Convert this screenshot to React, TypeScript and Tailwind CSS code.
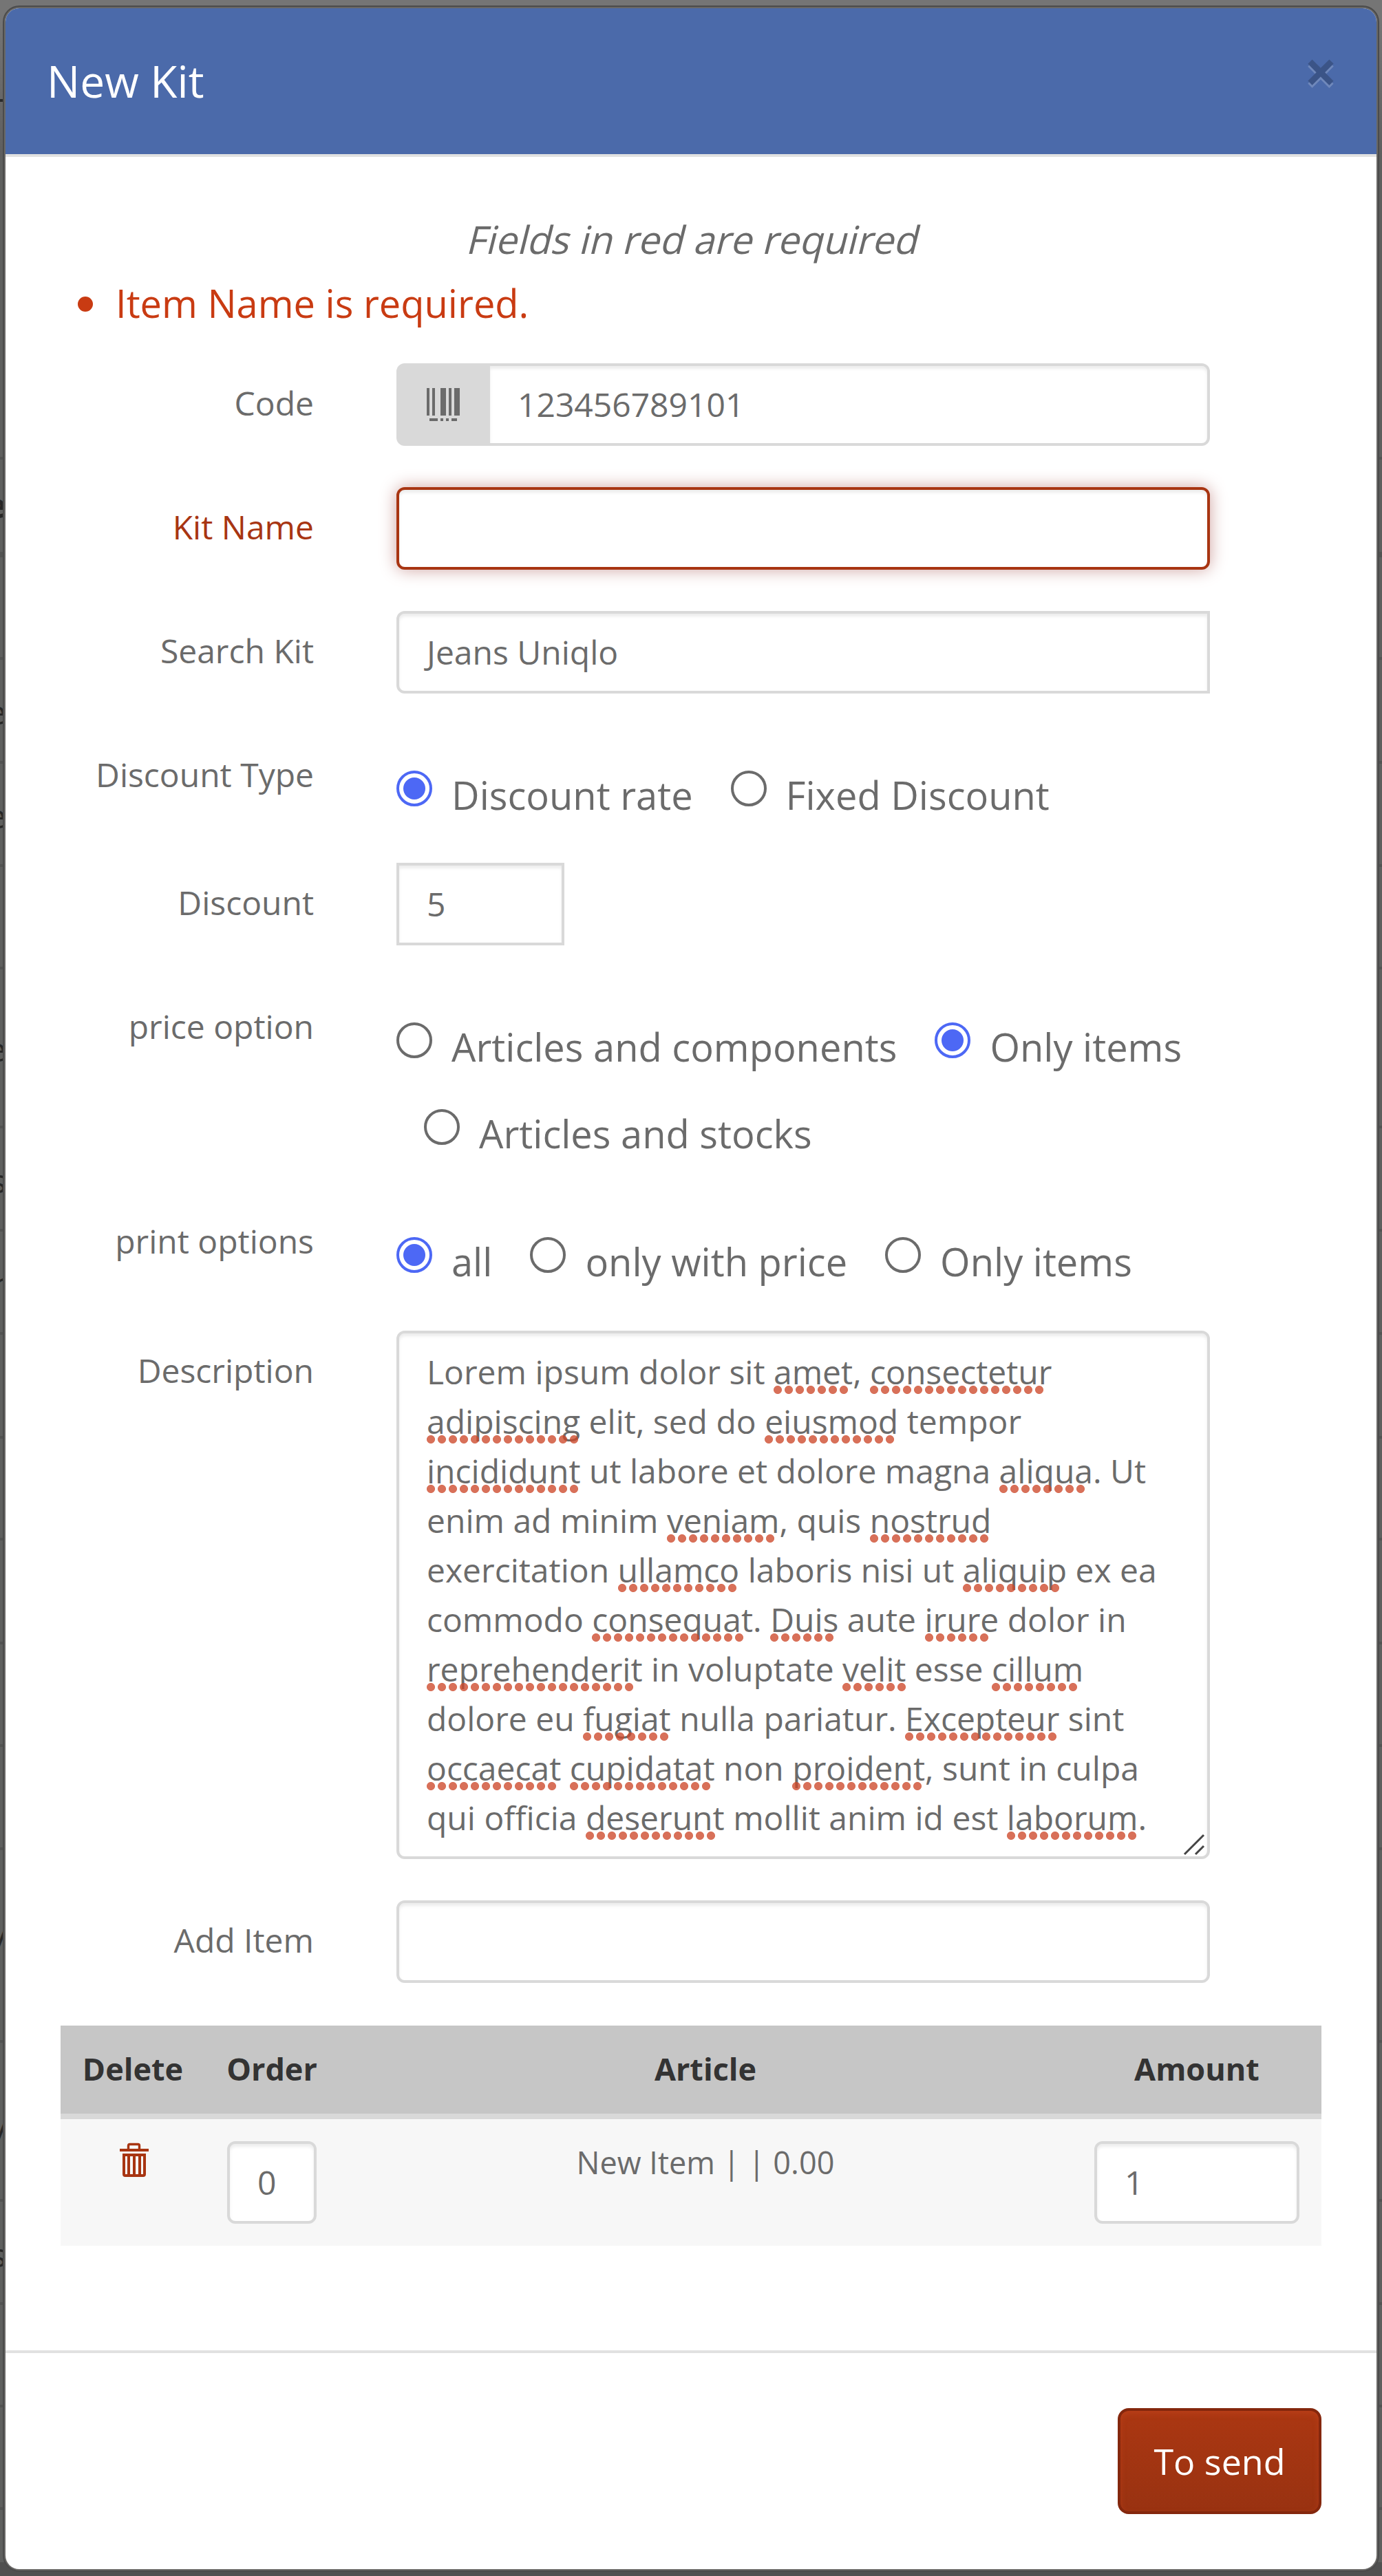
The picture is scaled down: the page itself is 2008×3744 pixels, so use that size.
import type { ReactNode } from "react";

const INPUT_SHADOW = "shadow-[inset_0_4px_4px_rgba(0,0,0,0.075)]";

function Field({ label, required, children, className = "" }: { label: string; required?: boolean; children?: ReactNode; className?: string }) {
  return (
    <div className={`flex items-start gap-[120px] ${className}`}>
      <label className={`mt-[22px] w-[368px] shrink-0 text-right text-[48px] leading-[72px] whitespace-nowrap ${required ? "text-[#a83512]" : ""}`}>
        {label}
      </label>
      <div className="w-[1182px]">{children}</div>
    </div>
  );
}

function Box({ children, className = "" }: { children?: ReactNode; className?: string }) {
  return (
    <div className={`flex h-[120px] items-center border-4 border-[#d9d9d9] bg-white px-[40px] text-[48px] leading-[72px] ${INPUT_SHADOW} ${className}`}>
      {children}
    </div>
  );
}

function Radio({ label, checked, className = "" }: { label: string; checked?: boolean; className?: string }) {
  return (
    <span className={`flex items-start gap-[28px] ${className}`}>
      <span
        className={`mt-[6px] flex size-[52px] items-center justify-center rounded-full border-4 bg-white ${checked ? "border-[#4d68f5]" : "border-[#6b6b6b]"}`}
      >
        {checked && <span className="size-[32px] rounded-full bg-[#4d68f5]" />}
      </span>
      <span className="mt-px text-[56px] leading-[80px] whitespace-nowrap">{label}</span>
    </span>
  );
}

function RadioLine({ children }: { children: ReactNode }) {
  return <div className="flex h-[126px] items-start gap-[55px] pt-[46px]">{children}</div>;
}

function BarcodeIcon() {
  return (
    <svg width="48" height="48" viewBox="0 0 48 48" fill="#6b6b6b" shapeRendering="crispEdges">
      <rect x="0" width="4" height="40" />
      <rect x="8" width="4" height="40" />
      <rect x="20" width="8" height="40" />
      <rect x="32" width="4" height="40" />
      <rect x="40" width="8" height="40" />
      <rect x="4" y="44" width="12" height="4" />
      <rect x="20" y="44" width="4" height="4" />
      <rect x="28" y="44" width="4" height="4" />
      <rect x="36" y="44" width="8" height="4" />
    </svg>
  );
}

function TrashIcon() {
  return (
    <svg className="ml-[4px]" width="42" height="50" viewBox="0 0 42 50" fill="none" stroke="#a83512">
      <path d="M12.5 9V4.500Q12.500 2.500 14.500 2.500H26.500Q28.500 2.500 28.500 4.500V9" strokeWidth="3.4" />
      <path d="M0 11H42" strokeWidth="4" />
      <path d="M6 18V46Q6 48 8 48H34Q36 48 36 46V18Z" strokeWidth="4" />
      <path d="M13 18V47M21 18V47M29 18V47" strokeWidth="4" />
    </svg>
  );
}

type Part = string | [word: string, dots: number];

const DESCRIPTION: Part[][] = [
  ["Lorem ipsum dolor sit ", ["amet", 7], ", ", ["consectetur", 16]],
  [["adipiscing", 14], " elit, sed do ", ["eiusmod", 12], " tempor"],
  [["incididunt", 14], " ut labore et dolore magna ", ["aliqua", 8], ". Ut"],
  ["enim ad minim ", ["veniam", 10], ", quis ", ["nostrud", 11]],
  ["exercitation ", ["ullamco", 11], " laboris nisi ut ", ["aliquip", 9], " ex ea"],
  ["commodo ", ["consequat", 14], ". ", ["Duis", 6], " aute ", ["irure", 6], " dolor in"],
  [["reprehenderit", 19], " in voluptate ", ["velit", 6], " esse ", ["cillum", 8]],
  ["dolore eu ", ["fugiat", 8], " nulla pariatur. ", ["Excepteur", 14], " sint"],
  [["occaecat", 12], " ", ["cupidatat", 13], " non ", ["proident", 12], ", sunt in culpa"],
  ["qui officia ", ["deserunt", 12], " mollit anim id est ", ["laborum", 12], "."],
];

function Misspelled({ word, dots }: { word: string; dots: number }) {
  return (
    <span className="relative inline-block">
      {word}
      <span
        className="absolute top-[56px] left-0 h-[12px] bg-[radial-gradient(circle_at_6px_6px,rgba(205,72,42,0.78)_5.6px,transparent_6.4px)] bg-[length:16px_12px] bg-repeat-x"
        style={{ width: dots * 16 }}
      />
    </span>
  );
}

const RULES = [
  "top-[664px]", "top-[955px]", "top-[1106px]", "top-[1256px]", "top-[1405px]", "top-[1636px]", "top-[1786px]", "top-[1936px]",
  "top-[2087px]", "top-[2235px]", "top-[2386px]", "top-[2535px]", "top-[2685px]", "top-[2965px]", "top-[3196px]", "top-[3346px]",
  "top-[3495px]", "top-[3644px]",
];

const EDGE_TEXT: [string, string][] = [
  ["e", "top-[699px] font-bold text-[#111]"],
  ["e", "top-[999px]"],
  ["e", "top-[1150px]"],
  ["e", "top-[1489px]"],
  ["s", "top-[1680px]"],
  ["r", "top-[1830px]"],
  ["y", "top-[2777px]"],
  ["y", "top-[3057px]"],
  ["s", "top-[3241px]"],
];

function Backdrop() {
  return (
    <div className="absolute inset-0 overflow-hidden bg-[#5e5f5e]">
      <div className="absolute inset-x-0 top-0 h-[228px] bg-linear-to-b from-[#757575] from-10% to-[#5e5e5e]" />
      <div className="absolute inset-x-0 bottom-0 h-[20px] bg-[#505050]" />
      {RULES.map((top) => (
        <div key={top} className={`absolute inset-x-0 h-[4px] bg-[#525352] ${top}`} />
      ))}
      <div className="absolute inset-x-0 top-[802px] h-[8px] bg-[#525352]" />
      <div className="absolute top-[144px] left-0 h-[4px] w-[6px] bg-[#2a2a2a]" />
      {EDGE_TEXT.map(([text, place]) => (
        <div key={place} className={`absolute left-0 flex w-[9px] justify-end overflow-hidden text-[48px] leading-[72px] text-[#262626] ${place}`}>
          {text}
        </div>
      ))}
    </div>
  );
}

export default function App() {
  return (
    <div className="relative h-[3744px] w-[2008px] overflow-hidden px-[8px] pt-[12px] font-['Open_Sans',sans-serif] text-[#6b6b6b]">
      <Backdrop />
      <div className="relative h-[3722px] w-[1992px] rounded-[20px] bg-white shadow-[0_0_0_2px_#696866,0_0_0_4px_#4b4b4b]">
        <header className="flex h-[216px] items-start justify-between rounded-t-[20px] border-b-4 border-[#e1e1e1] bg-[#4b6aaa] pr-[57px] pl-[60px]">
          <h1 className="mt-[60px] text-[64px] leading-[92px] text-white">New Kit</h1>
          <button className="mt-[49px] text-[84px] leading-[84px] font-bold text-black opacity-20 [text-shadow:0_4px_0_#fff]">×</button>
        </header>

        <div className="h-[3188px] px-[80px] pt-[79px]">
          {/* Slanted upright face keeps the wider regular letterforms */}
          <p className="flex justify-center text-[56px] leading-[80px]">
            <span className="origin-[50%_77%] -skew-x-[14deg]">Fields in red are required</span>
          </p>
          <div className="mt-[13px] mb-[48px] flex h-[80px] items-start pl-[25px] text-[56px] leading-[80px] text-[#c93b12]">
            <span className="mt-[31px] mr-[33px] size-[22px] rounded-full bg-[#c93b12]" />
            Item Name is required.
          </div>

          <Field label="Code">
            <div className="flex">
              <div className="flex h-[120px] w-[136px] items-center justify-center rounded-l-[12px] bg-[#d9d9d9]">
                <BarcodeIcon />
              </div>
              <Box className="flex-1 rounded-r-[12px] border-l-0">123456789101</Box>
            </div>
          </Field>
          <Field label="Kit Name" required className="mt-[60px]">
            <div className="h-[120px] rounded-[12px] border-4 border-[#a83512] bg-white shadow-[inset_0_4px_4px_rgba(0,0,0,0.075),0_0_24px_#cfa3a0]" />
          </Field>
          <Field label="Search Kit" className="mt-[60px]">
            <Box className="rounded-l-[12px]">Jeans Uniqlo</Box>
          </Field>
          <Field label="Discount Type" className="mt-[60px]">
            <RadioLine>
              <Radio label="Discount rate" checked />
              <Radio label="Fixed Discount" />
            </RadioLine>
          </Field>
          <Field label="Discount" className="mt-[60px]">
            <Box className="w-[244px]">5</Box>
          </Field>
          <Field label="price option" className="mt-[60px]">
            <RadioLine>
              <Radio label="Articles and components" />
              <Radio label="Only items" checked />
            </RadioLine>
            <RadioLine>
              <Radio label="Articles and stocks" className="ml-[40px]" />
            </RadioLine>
          </Field>
          <Field label="print options" className="mt-[60px]">
            <RadioLine>
              <Radio label="all" checked />
              <Radio label="only with price" />
              <Radio label="Only items" />
            </RadioLine>
          </Field>
          <Field label="Description" className="mt-[62px]">
            <div className={`relative h-[768px] rounded-[12px] border-4 border-[#d9d9d9] bg-white px-[40px] pt-[20px] text-[48px] leading-[72px] ${INPUT_SHADOW}`}>
              {DESCRIPTION.map((line, i) => (
                <div key={i} className="h-[72px] whitespace-pre">
                  {line.map((part, j) => (typeof part === "string" ? part : <Misspelled key={j} word={part[0]} dots={part[1]} />))}
                </div>
              ))}
              <svg className="absolute right-[3px] bottom-[1px]" width="32" height="32" viewBox="0 0 32 32" stroke="#444" strokeWidth="3">
                <path d="M2 30L30 2M18 30L30 18" />
              </svg>
            </div>
          </Field>
          <Field label="Add Item" className="mt-[60px]">
            <Box className="rounded-[12px]" />
          </Field>

          <div className="mt-[62px] text-center text-[45px] leading-[60px]">
            <div className="grid h-[136px] grid-cols-[210px_194px_1066px_362px] border-b-8 border-[#d9d9d9] bg-[#c6c6c6] pt-[33px] font-bold text-[#333]">
              <div>Delete</div>
              <div>Order</div>
              <div>Article</div>
              <div>Amount</div>
            </div>
            <div className="grid h-[184px] grid-cols-[210px_194px_1066px_362px] bg-[#f7f7f7]">
              <div className="flex justify-center pt-[34px]">
                <TrashIcon />
              </div>
              <div className="px-[32px] pt-[32px]">
                <Box className="rounded-[12px]">0</Box>
              </div>
              <div className="pt-[33px] whitespace-pre">New Item | | 0.00</div>
              <div className="px-[32px] pt-[32px]">
                <Box className="rounded-[12px]">1</Box>
              </div>
            </div>
          </div>
        </div>

        <footer className="flex justify-end border-t-4 border-[#e1e1e1] pt-[80px] pr-[80px]">
          <button className="h-[154px] w-[296px] rounded-[16px] border-4 border-[#84270d] bg-linear-to-b from-[#ab3712] to-[#993211] text-[52px] leading-[72px] text-white shadow-[inset_0_4px_8px_rgba(200,70,30,0.5)]">
            To send
          </button>
        </footer>
      </div>
    </div>
  );
}
